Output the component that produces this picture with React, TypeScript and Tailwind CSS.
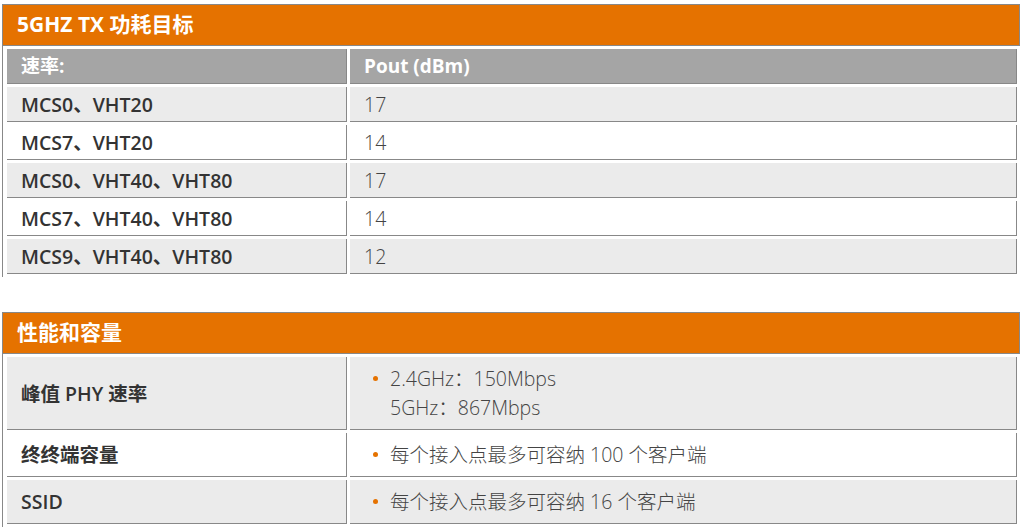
const font = { fontFamily: '"Open Sans", "Noto Sans CJK SC", sans-serif' };

const txRows = [
  ["MCS0、VHT20", "17"],
  ["MCS7、VHT20", "14"],
  ["MCS0、VHT40、VHT80", "17"],
  ["MCS7、VHT40、VHT80", "14"],
  ["MCS9、VHT40、VHT80", "12"],
];

const capRows: [string, string[]][] = [
  ["峰值 PHY 速率", ["2.4GHz：150Mbps", "5GHz：867Mbps"]],
  ["终终端容量", ["每个接入点最多可容纳 100 个客户端"]],
  ["SSID", ["每个接入点最多可容纳 16 个客户端"]],
];

function SectionHeader({ title }: { title: string }) {
  return (
    <div className="flex h-[42px] items-center border border-[#888] bg-[#e57200] pl-[14px] text-[21px] font-bold text-white">
      {title}
    </div>
  );
}

export default function App() {
  return (
    <div className="min-h-screen bg-white pt-[4px] pl-[2px] pr-[2px]" style={font}>
      <section>
        <SectionHeader title="5GHZ TX 功耗目标" />
        <div className="border-l border-[#888] pl-[4px] pt-[3px] pb-[3px] pr-[3px]">
          <div className="grid grid-cols-[340px_1fr] gap-[3px]">
            <div className="border-r border-b border-[#888] bg-[#a5a5a5] px-[14px] py-[5px] text-[19px] leading-[24px] font-bold text-white">
              速率:
            </div>
            <div className="border-r border-b border-[#888] bg-[#a5a5a5] px-[14px] py-[5px] text-[19px] leading-[24px] font-bold text-white">
              Pout (dBm)
            </div>
            {txRows.map(([rate, pout], i) => (
              <div key={rate} className="contents">
                <div
                  className={`border-r border-b border-[#888] px-[14px] pt-[6px] pb-[4px] text-[19.5px] leading-[24px] font-semibold text-[#333] ${
                    i % 2 === 0 ? "bg-[#ebebeb]" : "bg-white"
                  }`}
                >
                  {rate}
                </div>
                <div
                  className={`border-r border-b border-[#888] px-[14px] pt-[6px] pb-[4px] text-[19.5px] leading-[24px] font-light text-[#444] ${
                    i % 2 === 0 ? "bg-[#ebebeb]" : "bg-white"
                  }`}
                >
                  {pout}
                </div>
              </div>
            ))}
          </div>
        </div>
      </section>

      <section className="mt-[35px]">
        <SectionHeader title="性能和容量" />
        <div className="border-l border-[#888] pl-[4px] pt-[3px] pb-[3px] pr-[3px]">
          <div className="grid grid-cols-[340px_1fr] gap-[3px]">
            {capRows.map(([label, lines], i) => (
              <div key={label} className="contents">
                <div
                  className={`flex items-center border-r border-b border-[#888] px-[14px] py-[7px] text-[19.5px] leading-[29px] font-semibold text-[#333] ${
                    i % 2 === 0 ? "bg-[#ebebeb]" : "bg-white"
                  }`}
                >
                  {label}
                </div>
                <div
                  className={`border-r border-b border-[#888] pl-[23px] pr-[14px] py-[7px] text-[19.5px] leading-[29px] font-light text-[#444] ${
                    i % 2 === 0 ? "bg-[#ebebeb]" : "bg-white"
                  }`}
                >
                  <div className="flex gap-[12px]">
                    <span className="mt-[12px] h-[5px] w-[5px] shrink-0 rounded-full bg-[#e57200]" />
                    <div>
                      {lines.map((l) => (
                        <div key={l}>{l}</div>
                      ))}
                    </div>
                  </div>
                </div>
              </div>
            ))}
          </div>
        </div>
      </section>
    </div>
  );
}
